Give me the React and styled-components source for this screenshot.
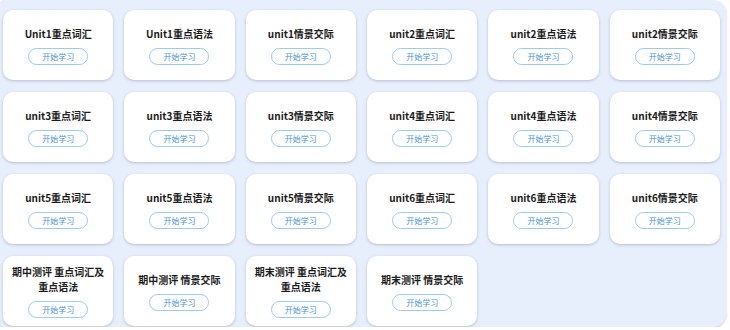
import React from "react";
import styled, { createGlobalStyle } from "styled-components";

const Global = createGlobalStyle`
  html, body { margin: 0; padding: 0; background: #ffffff; }
  body { font-family: "Noto Sans CJK SC", "Noto Sans", sans-serif; }
`;

const Panel = styled.div`
  width: 727px;
  height: 327px;
  box-sizing: border-box;
  background: #e7effc;
  border-radius: 4px 14px 14px 4px;
  box-shadow: 0 1px 1px rgba(0, 0, 0, 0.18);
  padding: 10px 7px 0 3px;
`;

const Grid = styled.div`
  display: grid;
  grid-template-columns: repeat(6, 1fr);
  grid-auto-rows: 70px;
  column-gap: 11px;
  row-gap: 12px;
`;

const Card = styled.div`
  background: #ffffff;
  border-radius: 10px;
  box-shadow: 0 1px 3px rgba(90, 100, 130, 0.35);
  display: flex;
  flex-direction: column;
  align-items: center;
  justify-content: center;
  gap: 7px;
  padding: 0 6px;
`;

const Title = styled.div`
  font-size: 10px;
  line-height: 15px;
  font-weight: 700;
  color: #1c1c1c;
  text-align: center;
`;

const StartButton = styled.button`
  width: 60px;
  height: 17px;
  box-sizing: border-box;
  border: 1px solid #9ec9f3;
  border-radius: 9px;
  background: #ffffff;
  color: #4a92e0;
  font-family: "Noto Sans CJK SC", sans-serif;
  font-size: 8px;
  line-height: 15px;
  padding: 0;
  cursor: pointer;
`;

const items = [
  "Unit1重点词汇", "Unit1重点语法", "unit1情景交际", "unit2重点词汇", "unit2重点语法", "unit2情景交际",
  "unit3重点词汇", "unit3重点语法", "unit3情景交际", "unit4重点词汇", "unit4重点语法", "unit4情景交际",
  "unit5重点词汇", "unit5重点语法", "unit5情景交际", "unit6重点词汇", "unit6重点语法", "unit6情景交际",
  "期中测评 重点词汇及重点语法", "期中测评 情景交际", "期末测评 重点词汇及重点语法", "期末测评 情景交际",
];

export default function App() {
  return (
    <>
      <Global />
      <Panel>
        <Grid>
          {items.map((t) => (
            <Card key={t}>
              <Title>{t}</Title>
              <StartButton>开始学习</StartButton>
            </Card>
          ))}
        </Grid>
      </Panel>
    </>
  );
}
